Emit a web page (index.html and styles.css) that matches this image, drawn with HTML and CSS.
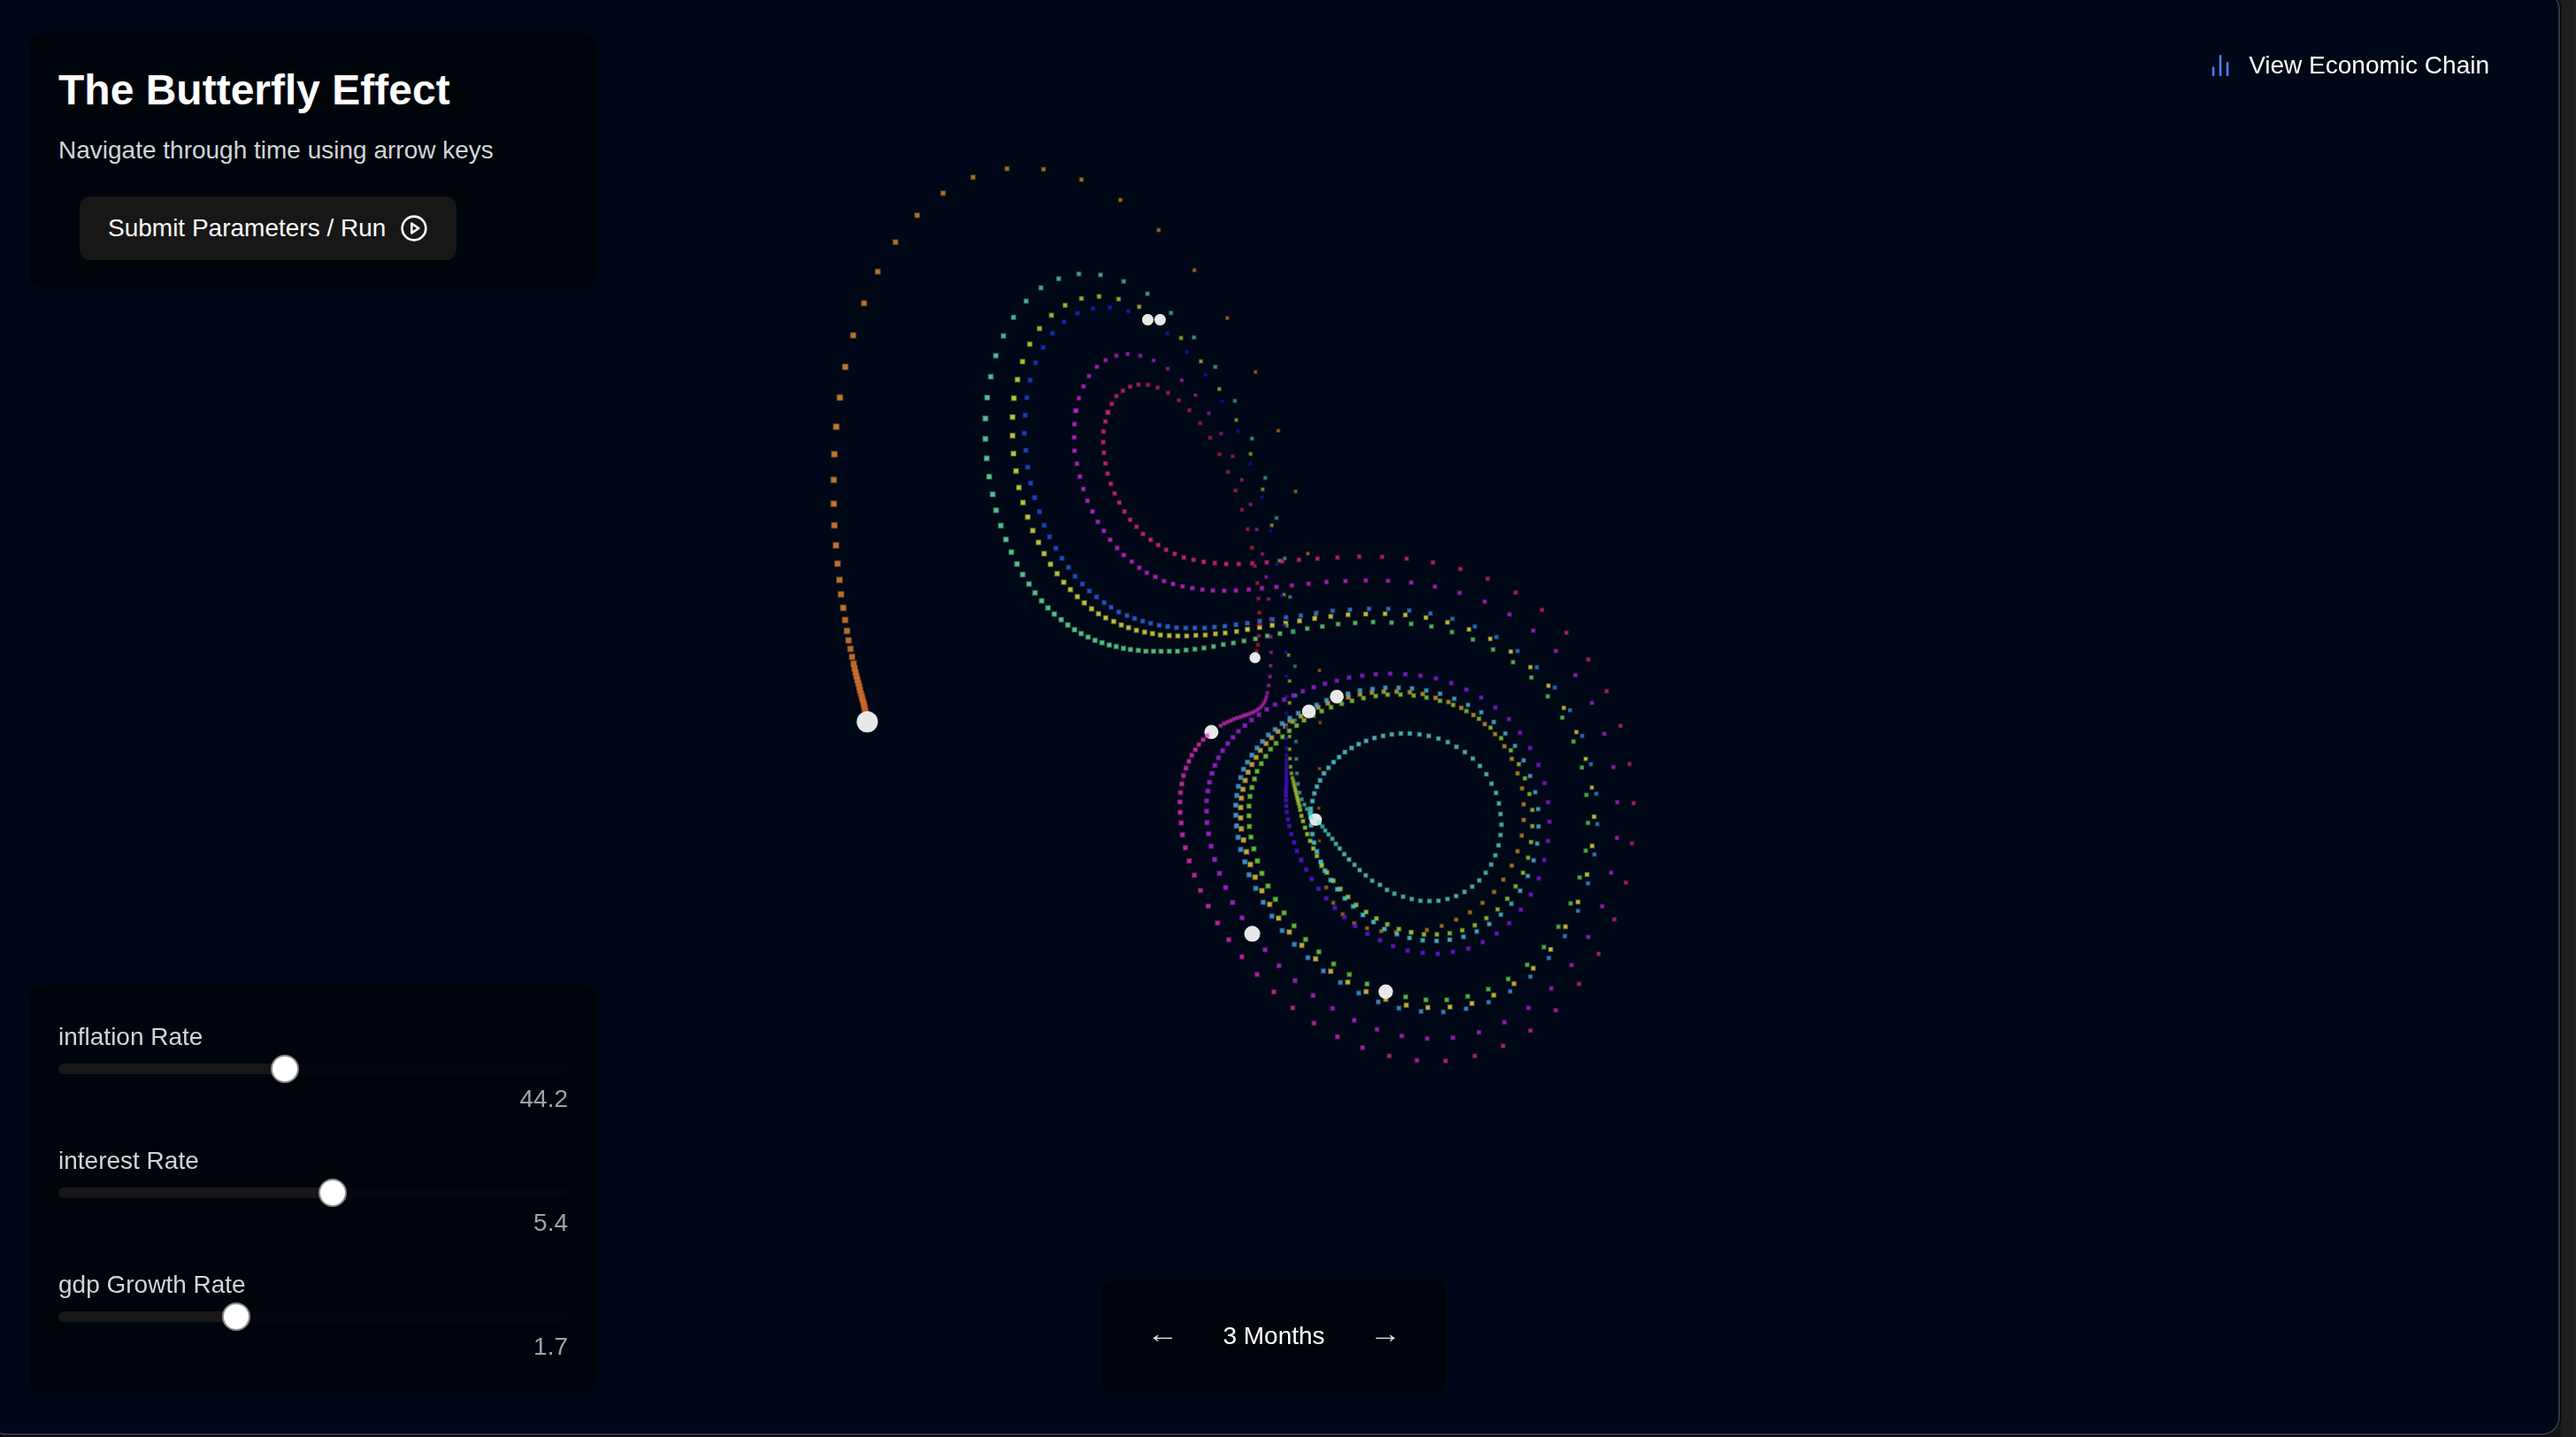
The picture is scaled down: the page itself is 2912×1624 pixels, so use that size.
FILE: index.html
```html
<!DOCTYPE html>
<html lang="en">
<head>
<meta charset="utf-8">
<title>The Butterfly Effect</title>
<link rel="stylesheet" href="styles.css">
</head>
<body>
<main class="frame">
  <canvas class="scene" id="scene" width="2880" height="1600"></canvas>
  <div class="row row-top">
    <section class="panel intro">
      <h1 class="title">The Butterfly Effect</h1>
      <p class="subtitle">Navigate through time using arrow keys</p>
      <button class="button button-primary">Submit Parameters / Run
        <svg class="icon" viewBox="0 0 24 24"><circle cx="12" cy="12" r="10"/><polygon points="10 8 16 12 10 16 10 8"/></svg>
      </button>
    </section>
    <button class="button button-link">
      <svg class="icon icon-blue" viewBox="0 0 24 24"><path d="M18 20V10M12 20V4M6 20v-6"/></svg>
      View Economic Chain
    </button>
  </div>
  <div class="row row-bottom">
    <section class="panel sliders">
      <div class="field">
        <label class="label">inflation Rate</label>
        <div class="track"><div class="range" style="width:44.4%"><span class="thumb"></span></div></div>
        <span class="value">44.2</span>
      </div>
      <div class="field">
        <label class="label">interest Rate</label>
        <div class="track"><div class="range" style="width:53.8%"><span class="thumb"></span></div></div>
        <span class="value">5.4</span>
      </div>
      <div class="field">
        <label class="label">gdp Growth Rate</label>
        <div class="track"><div class="range" style="width:34.9%"><span class="thumb"></span></div></div>
        <span class="value">1.7</span>
      </div>
    </section>
    <nav class="panel timeline">
      <button class="arrow">←</button>
      <span class="period">3 Months</span>
      <button class="arrow">→</button>
    </nav>
  </div>
</main>
<script src="scene.js"></script>
</body>
</html>
```
FILE: styles.css
```css
* { box-sizing: border-box; }

body {
  margin: 0;
  height: 1624px;
  overflow: hidden;
  background: linear-gradient(90deg, #141414 2894px, #1c1c1c 2896px, #1e1e1e 2909px, #242424 2911px);
  font-family: "Liberation Sans", Arial, sans-serif;
  font-size: 28px;
  line-height: 40px;
  color: #fff;
}

.frame {
  position: relative;
  display: flex;
  flex-direction: column;
  justify-content: space-between;
  width: 2908px;
  height: 1632px;
  margin: -10px 0 0 -14px;
  padding: 48px;
  border-radius: 20px;
  background: #000716;
  box-shadow: inset 0 0 0 2px #323844, 0 0 0 1px #000;
}

.scene { position: absolute; left: 14px; top: 10px; }

.row { position: relative; }
.row-top { display: flex; justify-content: space-between; align-items: flex-start; }
.row-bottom { display: grid; grid-template-columns: 1fr auto 1fr; align-items: end; }

.panel { padding: 32px; border-radius: 16px; background: #00040b; }
.intro, .sliders { width: 640px; }
.intro { height: 288px; }

.title { margin: 0 0 16px; font-size: 48px; line-height: 64px; font-weight: 700; }
.subtitle { margin: 0 0 32px; color: #d1d5db; }

.button {
  display: flex;
  align-items: center;
  gap: 16px;
  height: 72px;
  padding: 0 32px;
  border: 0;
  border-radius: 12px;
  background: none;
  font: inherit;
  color: #fff;
  white-space: nowrap;
}
.button-primary { margin-left: 24px; background: #171717; color: #fafafa; }

.icon { width: 32px; height: 32px; fill: none; stroke: currentColor; stroke-width: 2; stroke-linecap: round; stroke-linejoin: round; }
.icon-blue { color: #4a7df5; }

.sliders { display: flex; flex-direction: column; gap: 24px; }
.field { display: flex; flex-direction: column; gap: 8px; }
.label { height: 48px; line-height: 51px; color: #d1d5db; }
.track { height: 12px; border-radius: 6px; background: #04070f; }
.range { display: flex; justify-content: flex-end; align-items: center; height: 12px; border-radius: 6px 0 0 6px; background: #171717; }
.thumb { flex: none; width: 32px; height: 32px; margin-right: -16px; border: 2px solid #8b8b8b; border-radius: 50%; background: #fff; }
.value { text-align: right; color: #9ca3af; }

.timeline { grid-column: 2; display: flex; align-items: center; gap: 32px; height: 128px; }
.arrow { width: 72px; height: 64px; padding: 0 0 4px; border: 0; background: none; font: inherit; color: #e4e6e8; transform: scaleX(1.3); }
```
FILE: scene.js
```js
// Lorenz-style particle trails. Points are listed per tile of the scene;
// a tile gives its origin on the canvas and its scale on each axis.
const tiles = {
  A: [900, 160, 2.45, 3],
  B: [900, 460, 2.8, 3],
  C: [1080, 400, 3, 3],
  D: [1300, 600, 2.7509, 3],
  E: [1300, 900, 2.7509, 3]
};

// tile, first colour, last colour, first size, last size, points
const trails = [
  // orange
  ['D', '8a5a18', 'a06a1c', 3.5, 4, '527,1051 525,940 527,806 529,650 527,473 515,285 491,77'],
  ['C', 'a06a1c', 'a06a1c', 4, 4, '1154,466 1095,260 1018,61'],
  ['A', 'a87020', 'd08430', 4, 7, '1194,598 1103,436 1004,300 898,198 790,129 685,94 584,92 490,121 407,175 335,250 275,341 226,441 188,548 158,657 136,764 121,868'],
  ['B', 'd08430', 'c8642a', 7, 7, '127,67 121,160 119,247 119,328 121,401 126,469 131,531 137,586 142,635 149,681 155,722 161,759 166,791 172,820 177,847 182,870 185,886 188,900 191,913 194,925 197,937 200,949 202,960 205,971 208,982 210,992 213,1002 215,1012 217,1022 219,1032 221,1040'],
  ['E', '9a641c', 'b88428', 4.5, 4.8, '533,237 548,309 570,361 599,400 635,430 675,447 719,457 765,460 812,461 861,453 907,439 952,418 995,393 1034,361 1070,324 1099,282 1125,235 1143,186 1156,133 1162,80 1162,27'],
  ['D', 'b88428', 'd8b83a', 4.8, 6, '1157,873 1143,822 1125,773 1102,730 1073,689 1041,655 1006,624 968,600 928,580 888,566 848,553 808,547 767,545 727,545 690,548 653,554 617,564 582,574 553,584 523,598 495,612 469,628 444,646 421,662 398,680 378,701 361,721 343,744 330,768 317,792 305,818 296,846 289,876 284,906 282,938 282,973 284,1010 291,1048 300,1088'],
  ['E', 'd8b83a', 'd0c83c', 6, 5, '312,231 327,274 348,320 372,366 400,413 433,460 472,505 515,551 562,593 615,630 672,662 733,688 797,708 864,716 933,714 1001,702 1069,674 1132,635 1192,583 1246,519 1292,442 1331,358 1359,265 1375,168 1381,69'],
  // yellow
  ['D', 'd0c83c', 'd8d83e', 4.5, 5.5, '1374,870 1355,773 1326,682 1287,600 1239,525 1183,462 1122,409 1058,366 992,334 925,310 858,294 794,285 731,281 671,282 616,284 562,290 512,297 465,305 422,313 380,320 341,327 303,334'],
  ['B', 'd0d03c', 'c8d83c', 5.2, 6, '1394,761 1358,766 1327,769 1295,773 1265,774 1236,776 1208,776 1181,775 1153,773 1128,768 1103,763 1077,757 1052,748 1029,739 1005,727 980,715 957,701 935,684 912,664 890,643 868,619 847,594 826,565 805,533 785,497 767,459 749,419 733,373 718,324 705,273 696,217 688,158 685,97 685,34'],
  ['A', 'c8d83c', '8a9c2c', 6, 4.2, '603,870 613,807 627,746 647,687 674,634 707,589 745,555 790,532 839,525 893,534 950,560 1008,606 1066,666 1121,745 1172,839 1219,944'],
  ['C', '8a9c2c', '809c2c', 4.2, 4, '1001,339 1042,459 1073,581 1099,701 1114,816 1124,922 1130,1021'],
  ['D', '88a42c', 'a8cc34', 4, 5, '434,509 434,583 433,645 434,697 434,740 435,772 437,800 440,822 443,838 446,849 448,859 450,868 452,877 454,886 456,895 458,904 460,913 462,922 465,933 467,946 471,966 476,984 482,1006 489,1028 498,1051 508,1077 519,1102'],
  ['E', 'a0cc34', '88bc34', 5.3, 4.8, '534,233 550,258 570,286 592,314 616,341 641,368 672,392 704,414 738,434 774,450 812,461 852,468 892,468 932,464 971,454 1010,437 1046,413 1081,383 1111,347 1137,305 1160,259 1176,208 1185,155 1189,101 1189,46'],
  // lime
  ['D', '88bc34', '68cc38', 4.8, 5.6, '1180,892 1166,839 1147,791 1122,744 1092,703 1059,667 1023,637 984,611 943,590 902,576 860,565 820,558 779,555 739,555 702,560 664,567 628,576 596,586 563,598 534,611 508,626 479,642 456,660 433,678 412,698 392,720 375,740 360,764 346,789 333,815 325,841 317,870 311,900 308,933 308,966 309,1002 314,1038 323,1078'],
  ['E', '68cc38', '50bc48', 5.8, 4.8, '334,219 348,261 367,304 390,349 417,395 448,439 484,485 525,527 571,568 620,604 675,636 733,662 795,680 858,690 923,690 988,678 1052,654 1114,619 1173,571 1225,511 1270,442 1308,363 1336,275 1355,184 1362,90'],
  // green
  ['D', '50bc50', '58cc7c', 4.8, 5.2, '1357,895 1343,802 1317,714 1282,633 1237,561 1186,497 1129,445 1067,402 1004,368 939,343 875,324 812,315 751,311 694,309 638,312 585,316 536,324 489,331 445,341 404,348 365,356 328,366 292,373'],
  ['B', '58cc7c', '5cd4a4', 5.2, 6.2, '1384,800 1352,805 1321,812 1291,817 1262,821 1234,824 1207,828 1181,828 1155,828 1131,828 1107,828 1083,825 1058,822 1036,818 1013,812 991,807 968,799 946,791 924,780 902,768 881,755 860,739 839,721 817,702 797,681 777,657 756,630 737,600 717,568 699,532 681,492 664,449 648,402 633,350 622,296 611,236 603,174 599,108 599,39'],
  ['A', '5cd4a4', '3c9484', 6, 4.4, '529,868 539,797 553,726 574,659 602,596 637,541 678,496 727,465 783,449 843,452 907,474 973,516 1038,581 1102,664 1161,764 1215,879'],
  ['C', '3c9484', '309480', 4.4, 4, '1006,287 1051,420 1089,556 1117,693 1135,824 1146,942'],
  // teal
  ['D', '308478', '58ccb8', 4, 5, '451,459 453,558 452,642 454,714 455,773 457,822 460,858 465,887 472,910 480,928 488,943 496,956 505,966 527,990 536,1002 545,1016 555,1029 567,1044 578,1061 590,1077 604,1096 619,1114'],
  ['E', '50bca8', '50bcb0', 5, 5, '636,232 652,250 671,268 691,286 715,300 737,317 760,330 787,340 814,348 841,354 869,355 897,354 925,348 952,338 978,324 1002,306 1024,285 1044,259 1061,231 1074,200 1084,166'],
  ['D', '50bcb4', '50c4d0', 5, 5.2, '1090,1031 1093,996 1090,960 1085,924 1076,888 1062,857 1046,825 1026,797 1004,772 979,750 953,732 926,716 897,704 867,695 838,690 808,687 780,687 752,690 725,695 698,702 672,712 649,723 627,736 606,750 588,767 571,784 555,803 541,822 529,846 519,867 511,890 505,916 500,942 500,956 500,970 501,998 505,1028 510,1057 519,1087'],
  ['E', '50c4d0', '48acc8', 5.4, 4.8, '531,222 544,252 562,284 583,315 606,346 632,373 662,402 695,426 729,450 768,467 807,480 848,488 891,490 932,486 975,476 1016,458 1055,433 1091,401 1124,364 1151,320 1175,270 1193,217 1204,160 1208,102 1207,43'],
  // sky
  ['D', '48a8c8', '409cd4', 4.8, 5.8, '1198,886 1182,831 1162,778 1135,729 1105,687 1069,648 1030,615 989,590 946,569 902,552 859,541 815,534 773,532 732,532 692,536 653,541 616,552 582,562 549,574 518,590 490,603 461,618 435,635 411,653 389,673 368,692 350,714 333,736 317,760 303,784 291,808 282,836 275,866 270,897 267,930 267,964 269,1000 274,1039 282,1080'],
  ['E', '409cd4', '3080c8', 5.8, 4.6, '295,222 308,266 329,312 352,359 379,406 411,455 449,502 491,547 539,592 592,631 649,667 710,697 774,718 843,729 912,731 983,720 1053,698 1120,661 1183,611 1240,548 1290,474 1331,388 1362,295 1382,197 1391,94'],
  // blue
  ['D', '2c78c4', '2c70d8', 4.6, 5.2, '1388,891 1371,791 1344,695 1306,608 1259,531 1203,462 1143,407 1077,360 1010,324 940,298 872,280 806,270 741,264 681,264 622,267 568,271 517,278 469,287 423,293 381,300 341,306 303,313'],
  ['B', '2c70d8', '1844d4', 5.2, 5.4, '1392,738 1357,743 1324,746 1293,749 1262,749 1233,749 1204,748 1176,744 1149,740 1122,733 1097,726 1071,717 1047,707 1021,695 997,679 975,663 951,644 928,624 906,600 883,574 862,544 841,513 822,479 802,440 785,401 770,355 755,307 742,258 733,204 727,147 722,89 725,28'],
  ['A', '1440cc', '1408a8', 5.4, 4.2, '639,868 648,809 663,750 684,698 710,650 742,611 779,582 822,566 869,563 920,575 974,604 1028,650 1082,713 1133,791 1180,881'],
  ['C', '180898', '280cac', 4.2, 3.8, '958,262 1001,372 1039,486 1069,600 1090,713 1106,820 1116,920 1121,1011'],
  // violet
  ['D', '280ca8', '5414d0', 3.8, 5, '424,492 425,561 424,618 424,665 424,704 424,736 424,760 424,775 424,787 424,799 424,810 424,821 424,832 424,843 424,854 424,865 423,876 423,887 423,899 423,914 424,933 425,953 429,978 433,1001 439,1028 448,1056 457,1085'],
  ['E', '5414d0', '7c18d0', 5.2, 4.8, '470,216 486,248 503,280 524,313 548,346 575,378 605,409 638,439 676,466 715,488 756,508 801,523 848,530 895,534 942,527 990,516 1035,494 1078,465 1117,430 1153,384 1184,333 1209,278 1226,216 1238,151 1242,86 1238,20'],
  // purple
  ['D', '7c18cc', 'a420cc', 4.8, 5.6, '1227,855 1208,793 1182,736 1151,684 1116,638 1074,599 1030,565 984,538 937,516 889,500 841,491 794,486 747,484 702,486 660,491 619,497 581,508 544,518 509,530 475,544 446,558 417,572 389,589 363,605 339,623 316,641 295,660 275,679 258,700 242,721 226,745 213,769 202,795 193,822 185,852 180,882 176,915 176,950 177,989 182,1027 190,1069'],
  ['E', 'a424d0', 'a41cb8', 5.6, 4.6, '201,214 216,261 235,309 257,360 286,412 358,520 401,574 451,625 507,675 568,719 635,759 706,790 783,812 862,821 942,818 1023,800 1102,766 1177,717 1248,651 1311,572 1363,477 1406,373 1434,259 1452,141 1453,20'],
  ['D', 'a41cbc', 'b820c8', 4.6, 5, '1441,801 1413,688 1374,583 1323,489 1262,407 1192,338 1118,283 1041,240 963,210 886,189 812,175 740,169 671,168 608,170 549,173 493,179 441,185 393,190 348,194 307,199 267,202'],
  ['B', 'b820c8', 'bc24d0', 5, 5, '1355,623 1319,622 1286,619 1254,614 1223,608 1193,600 1164,590 1137,576 1110,562 1086,545 1062,524 1037,502 1016,478 994,450 974,420 955,389 938,354 922,318 909,278 898,236 889,192 881,148 880,103 881,58 885,13'],
  ['A', 'bc24d0', '901c98', 5, 4, '775,912 783,870 796,830 811,795 833,764 857,741 887,726 918,720 953,726 990,742 1029,770 1068,809 1106,860 1143,921'],
  ['C', '901c98', '98209c', 4, 4, '901,270 940,347 971,427 1001,510 1022,595 1041,678 1054,756 1062,831 1069,899 1070,959 1071,1012'],
  // magenta
  ['D', '98209c', 'bc28ac', 4, 4.6, '375,457 373,494 369,524 365,549 362,562 359,573 355,582 350,590 344,598 337,604 330,609 322,614 314,618 306,621 298,624 290,627 281,631 271,634 261,638 251,643 241,648 231,653 220,660'],
  ['D', 'cc28ac', 'cc28ac', 5, 5.6, '165,708 152,724 141,742 130,761 121,781 112,804 104,830 99,858 95,887 93,919 94,954 97,990 101,1030 110,1074'],
  ['E', 'cc28ac', 'b01c84', 5.6, 4.6, '122,219 138,267 157,319 181,372 210,429 245,486 286,544 333,604 385,663 444,717 510,769 583,815 661,852 744,880 830,895 919,897 1010,880 1098,846 1183,794 1262,725 1334,636 1395,534 1444,417 1480,292 1499,159 1504,23'],
  // rose
  ['D', 'b01c84', 'cc247c', 4.6, 5, '1491,790 1463,661 1420,543 1363,436 1295,345 1219,268 1137,209 1050,162 965,129 880,107 798,94 722,88 651,87 583,90 521,94 463,98 411,103 363,107 318,110 276,112 237,112'],
  ['B', 'cc247c', 'cc2468', 5, 5, '1325,529 1290,525 1258,518 1227,510 1198,498 1171,484 1146,468 1122,450 1098,430 1077,406 1057,382 1039,354 1023,324 1008,293 996,260 986,226 979,191 974,155 972,119 973,83 979,49 987,18'],
  ['A', 'c82464', 'a01c40', 5, 4.4, '863,918 874,889 887,863 905,845 925,831 948,824 974,825 1001,834 1030,852 1060,877 1089,911 1119,955'],
  ['C', 'a81c40', 'b01c30', 4.4, 4.2, '864,284 896,340 925,400 950,463 972,528 991,594 1006,657 1016,719 1024,777 1028,829 1031,877 1031,917 1029,956 1026,986 1021,1008']
];

// particle heads: x, y, radius
const heads = [
  [980.4, 815.7, 12], [1297.5, 361.3, 6.5], [1311.4, 361.3, 6.5],
  [1418.7, 743.3, 6.2], [1369.4, 827.3, 8], [1479.6, 804, 7.8],
  [1511.2, 787.3, 7.8], [1487.2, 926.3, 7], [1415.6, 1055.3, 9],
  [1566.5, 1120.7, 8.2]
];

// bright particles passing in front of a head
const front = [
  [1364.7, 831.3, '#f04cd8'], [1482, 923.5, '#6ceee8'], [1491, 929.7, '#7cf4e0']
];

const ctx = document.getElementById('scene').getContext('2d');
const channels = hex => [0, 2, 4].map(i => parseInt(hex.slice(i, i + 2), 16));
const mix = (a, b, t) => a + (b - a) * t;

// a solid core with a faint one-pixel rim
function particle(x, y, size, colour) {
  const rim = size + 0.7;
  const core = size - 1.2;
  ctx.fillStyle = colour;
  ctx.globalAlpha = 0.4;
  ctx.fillRect(x - rim / 2, y - rim / 2, rim, rim);
  ctx.globalAlpha = 0.85;
  ctx.fillRect(x - core / 2, y - core / 2, core, core);
  ctx.globalAlpha = 1;
}

for (const [tile, from, to, s0, s1, list] of trails) {
  const [ox, oy, sx, sy] = tiles[tile];
  const c0 = channels(from), c1 = channels(to);
  const points = list.split(' ').map(p => p.split(',').map(Number));
  points.forEach(([px, py], i) => {
    const t = i / Math.max(1, points.length - 1);
    const rgb = c0.map((c, k) => Math.round(mix(c, c1[k], t)));
    particle(ox + px / sx, oy + py / sy, mix(s0, s1, t), `rgb(${rgb.join(',')})`);
  });
}

ctx.fillStyle = '#e8e8e8';
for (const [x, y, r] of heads) {
  ctx.beginPath();
  ctx.arc(x, y, r, 0, Math.PI * 2);
  ctx.fill();
}
for (const [x, y, colour] of front) particle(x, y, 5, colour);
```
